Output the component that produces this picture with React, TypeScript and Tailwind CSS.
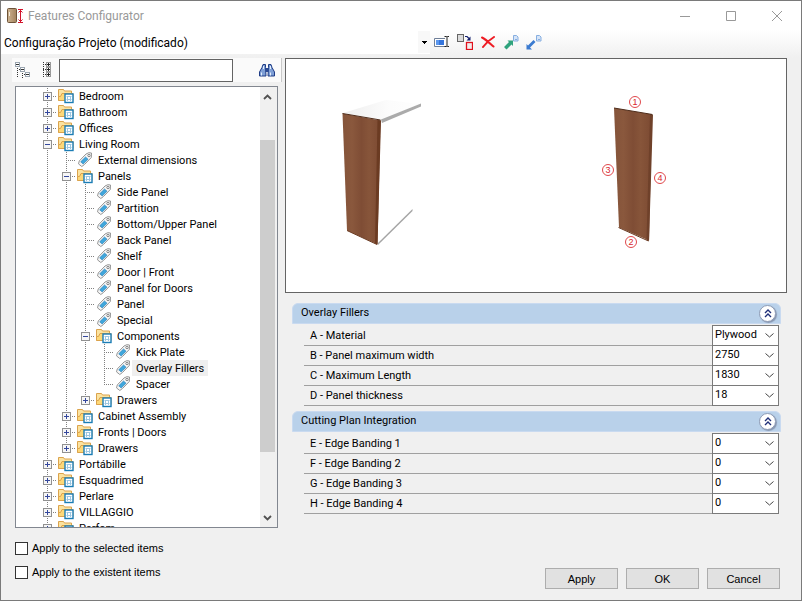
import { Fragment, useId, useState } from 'react'
import type { ReactNode } from 'react'

interface TreeNode {
  label: string
  kind: 'folder' | 'tag'
  children?: TreeNode[]
}

interface PropertyField {
  label: string
  value: string
}

const folder = (label: string, children?: TreeNode[]): TreeNode => ({ label, kind: 'folder', children })
const tag = (label: string): TreeNode => ({ label, kind: 'tag' })

const tree: TreeNode[] = [
  folder('Bedroom'),
  folder('Bathroom'),
  folder('Offices'),
  folder('Living Room', [
    tag('External dimensions'),
    folder('Panels', [
      tag('Side Panel'),
      tag('Partition'),
      tag('Bottom/Upper Panel'),
      tag('Back Panel'),
      tag('Shelf'),
      tag('Door | Front'),
      tag('Panel for Doors'),
      tag('Panel'),
      tag('Special'),
      folder('Components', [tag('Kick Plate'), tag('Overlay Fillers'), tag('Spacer')]),
      folder('Drawers'),
    ]),
    folder('Cabinet Assembly'),
    folder('Fronts | Doors'),
    folder('Drawers'),
  ]),
  folder('Portábille'),
  folder('Esquadrimed'),
  folder('Perlare'),
  folder('VILLAGGIO'),
  folder('Perfom'),
]

const overlayFields: PropertyField[] = [
  { label: 'A - Material', value: 'Plywood' },
  { label: 'B - Panel maximum width', value: '2750' },
  { label: 'C - Maximum Length', value: '1830' },
  { label: 'D - Panel thickness', value: '18' },
]

const cuttingFields: PropertyField[] = [
  { label: 'E - Edge Banding 1', value: '0' },
  { label: 'F - Edge Banding 2', value: '0' },
  { label: 'G - Edge Banding 3', value: '0' },
  { label: 'H - Edge Banding 4', value: '0' },
]

function AppIcon() {
  return (
    <svg width="17" height="16" viewBox="0 0 17 16">
      <defs>
        <linearGradient id="door">
          <stop offset="0" stopColor="#cdb491" />
          <stop offset="1" stopColor="#a2825d" />
        </linearGradient>
      </defs>
      <rect x="0.5" y="0.5" width="9" height="14" rx="1" fill="url(#door)" stroke="#6d5338" />
      <rect x="2" y="4" width="1" height="4" fill="#f4ead8" />
      <path d="M11 1.5h5M11 14.5h5M13.5 2v12M11.500 4.500l2-2 2 2M11.500 11.500l2 2 2-2" stroke="#d2142c" fill="none" />
    </svg>
  )
}

function FolderIcon() {
  return (
    <svg width="18" height="16" viewBox="0 0 18 16" className="shrink-0">
      <path d="M1.500 12.500V1.500h5l1 1.500h7v2.500" fill="#fbe3a0" stroke="#dba34c" />
      <path d="M1.500 12.500V8.500h2l1.500-3h11v7z" fill="#fdd878" stroke="#dba34c" />
      <rect x="8" y="6" width="8" height="8.500" fill="#fff" stroke="#1b7db5" strokeWidth="1.400" />
      <path d="M9.500 8.500h5M9.500 11.500h5M10.500 8v5M13.500 8v5" stroke="#9cc6e0" fill="none" />
    </svg>
  )
}

function TagIcon() {
  return (
    <svg width="18" height="16" viewBox="0 0 18 16" className="shrink-0">
      <path d="M10 2L12.800.7l2.700.3-.2 4.500L8.500 12.500l-2.700 2-3.300-2.600.8-3z" fill="#f6f6f6" stroke="#969696" />
      <circle cx="13" cy="3.500" r="1.200" fill="#fff" stroke="#777" strokeWidth=".9" />
      <path d="M9.500 5l2.500 2.200L7.200 12 4.700 9.800z" fill="#3fa7dc" stroke="#2379b4" strokeWidth=".6" />
    </svg>
  )
}

// dotted connector lines on the left of a row
function Guide({ kind, box }: { kind: 'through' | 'branch' | 'end' | 'none'; box?: 'plus' | 'minus' }) {
  return (
    <svg width="19" height="16" viewBox="0 0 19 16" className="shrink-0" shapeRendering="crispEdges">
      {kind !== 'none' && (
        <path d={kind === 'end' ? 'M9.5 0v8' : 'M9.5 0v16'} stroke="#808080" strokeDasharray="1 1" />
      )}
      {(kind === 'branch' || kind === 'end') && <path d="M9 8.5h10" stroke="#808080" strokeDasharray="1 1" />}
      {box && (
        <>
          <rect x="5.5" y="4.5" width="8" height="8" fill="#f6f6f6" stroke="#919191" />
          <path d={box === 'plus' ? 'M7 8.5h5M9.5 6v5' : 'M7 8.5h5'} stroke="#34479c" />
        </>
      )}
    </svg>
  )
}

interface TreeRowsProps {
  nodes: TreeNode[]
  parents: boolean[]
  selected: string
  onSelect: (label: string) => void
}

function TreeRows({ nodes, parents, selected, onSelect }: TreeRowsProps) {
  return (
    <>
      {nodes.map((node, index) => {
        const last = index === nodes.length - 1
        return (
          <Fragment key={node.label}>
            <li className="flex h-4 items-center">
              {parents.map((more, level) => (
                <Guide key={level} kind={more ? 'through' : 'none'} />
              ))}
              <Guide
                kind={last ? 'end' : 'branch'}
                box={node.kind === 'tag' ? undefined : node.children ? 'minus' : 'plus'}
              />
              {node.kind === 'folder' ? <FolderIcon /> : <TagIcon />}
              <button
                onClick={() => onSelect(node.label)}
                className={
                  node.label === selected
                    ? 'h-4 bg-[#efefef] px-1 pt-px leading-[15px] whitespace-nowrap'
                    : 'h-4 px-1 pt-px leading-[15px] whitespace-nowrap'
                }
              >
                {node.label}
              </button>
            </li>
            {node.children && (
              <TreeRows nodes={node.children} parents={[...parents, !last]} selected={selected} onSelect={onSelect} />
            )}
          </Fragment>
        )
      })}
    </>
  )
}

function ToolButton({ label, children }: { label: string; children: ReactNode }) {
  return (
    <button aria-label={label} className="flex h-6 w-[23px] items-center justify-center">
      {children}
    </button>
  )
}

function Toolbar() {
  return (
    <div className="flex h-6 items-center">
      <div className="grid h-6 w-[429px] items-center bg-white">
        <select
          aria-label="Configuration"
          className="col-start-1 row-start-1 h-6 appearance-none pt-0.5 pl-[3px] text-[12px] outline-none"
        >
          <option>Configuração Projeto (modificado)</option>
        </select>
        <span className="pointer-events-none col-start-1 row-start-1 flex h-[22px] w-3 items-center justify-center justify-self-end bg-[#f8f8f8]">
          <svg width="5" height="3" viewBox="0 0 5 3" shapeRendering="crispEdges">
            <path d="M0 0h5v1H4v1H3v1H2V2H1V1H0z" fill="#000" />
          </svg>
        </span>
      </div>
      <ToolButton label="Rename">
        <svg width="16" height="14" viewBox="0 0 16 14">
          <path d="M11 3.5H.5v8H11" fill="#fff" stroke="#6f7f98" />
          <rect x="2" y="5" width="8" height="5" fill="#5b97ee" />
          <rect x="5" y="5" width="5" height="5" fill="#3575dc" />
          <path d="M10.500 1.500h2l.5.5.5-.5H15M13 2v9M10.500 11.500h2l.5-.5.5.5H15" stroke="#222" fill="none" />
        </svg>
      </ToolButton>
      <ToolButton label="Copy">
        <svg width="16" height="16" viewBox="0 0 16 16">
          <rect x=".5" y=".5" width="6" height="7" fill="#dcdcdc" stroke="#666" />
          <path d="M8 2.500h2l2 2" stroke="#14206e" fill="none" strokeWidth="1.200" />
          <path d="M13.500 2.500v4h-4z" fill="#14206e" />
          <rect x="9.500" y="8.500" width="6" height="7" fill="#f2eeee" stroke="#e0101c" strokeWidth="1.300" />
        </svg>
      </ToolButton>
      <ToolButton label="Delete">
        <svg width="14" height="12" viewBox="0 0 14 12">
          <path d="M1 1.500c4 2 8 6 11.500 9M13 1C8 4 5 7 2 11" stroke="#ee1c24" strokeWidth="2" strokeLinecap="round" fill="none" />
        </svg>
      </ToolButton>
      <ToolButton label="Export">
        <svg width="16" height="15" viewBox="0 0 16 15">
          <path d="M1 12l5-5-1.500-1.500H10V11L8.500 9.500 3.500 14.500z" fill="#2fa37d" />
          <path d="M10.500.5h3l1.500 1.500v4h-4.500z" fill="#d5e4f8" stroke="#86aee0" />
          <path d="M12 4.500h2" stroke="#86aee0" />
        </svg>
      </ToolButton>
      <ToolButton label="Import">
        <svg width="16" height="15" viewBox="0 0 16 15">
          <path d="M.5 14.500V9L2 10.500 7.500 5l2 2L4 12.500 6 14.500z" fill="#3b7bd0" />
          <path d="M10.500.5h3l1.500 1.500v4h-4.500z" fill="#d5e4f8" stroke="#86aee0" />
          <path d="M12 4.500h2" stroke="#86aee0" />
        </svg>
      </ToolButton>
    </div>
  )
}

function SearchBar() {
  return (
    <div className="flex h-6 items-center bg-[#fafafa] pr-0.5">
      <button aria-label="Collapse all" className="flex w-[22px] justify-center">
        <svg width="16" height="16" viewBox="0 0 16 16" shapeRendering="crispEdges">
          <path d="M2.500 6v10M7.500 11v5M5 7.500H3M10 12.500H8" stroke="#333" strokeDasharray="1 1" />
          <path d="M.5.5h4v4h-4zM5.500 5.500h4v4h-4zM10.500 10.500h4v4h-4z" fill="#fff" stroke="#9aa5b0" />
          <path d="M1 2.500h3M6 7.500h3M11 12.500h3" stroke="#333" />
        </svg>
      </button>
      <button aria-label="Expand all" className="flex w-[25px] justify-center">
        <svg width="8" height="16" viewBox="0 0 8 16" shapeRendering="crispEdges">
          <path d="M.5 0v16M0 2.500h3M0 7.500h3M0 12.500h3" stroke="#333" strokeDasharray="1 1" />
          <path d="M3.500.5h4v4h-4zM3.500 5.500h4v4h-4zM3.500 10.500h4v4h-4z" fill="#fff" stroke="#9a9a9a" />
          <path d="M4 2.500h3M5.500 1v3M4 7.500h3M5.500 6v3M4 12.500h3M5.500 11v3" stroke="#222" />
        </svg>
      </button>
      <input
        aria-label="Search"
        type="text"
        className="h-[23px] w-[174px] border border-[#646464] bg-white px-1 outline-none"
      />
      <button aria-label="Find" className="ml-auto flex w-6 justify-center">
        <svg width="16" height="15" viewBox="0 0 16 15">
          <path d="M3 4.500L4 1.500h2.500v3l.5 8.500H.5V9zM13 4.500L12 1.500H9.500v3L9 13h6.500V9z" fill="#7e9fd6" stroke="#1f3c86" />
          <path d="M6.500 5h3v4h-3z" fill="#2b4a94" />
          <path d="M2.500 9.500v3M11.500 9.500v3M4.500 3v3M11.500 3v3" stroke="#e4eefb" />
        </svg>
      </button>
    </div>
  )
}

function ScrollBar() {
  return (
    <div className="flex w-[17px] shrink-0 flex-col items-start bg-[#f0f0f0]">
      <svg width="15" height="53" viewBox="0 0 15 53">
        <path d="M4 12l3.500-3.500L11 12" stroke="#505050" strokeWidth="1.800" fill="none" />
      </svg>
      <div className="w-[15px] flex-1 bg-[#cdcdcd]" />
      <svg width="15" height="75" viewBox="0 0 15 75">
        <path d="M4 64l3.500 3.500L11 64" stroke="#505050" strokeWidth="1.800" fill="none" />
      </svg>
    </div>
  )
}

function Callout({ x, y, value }: { x: number; y: number; value: string }) {
  return (
    <>
      <circle cx={x} cy={y} r="5.500" fill="#fff" stroke="#e0484c" />
      <text x={x} y={y + 3} textAnchor="middle" fontSize="9" fill="#d8252c">
        {value}
      </text>
    </>
  )
}

function Preview() {
  return (
    <div className="flex h-[235px] justify-center border border-[#646464] bg-white">
      <svg viewBox="0 0 500 233" className="h-full w-full font-['Liberation_Sans',Arial,sans-serif]">
        <defs>
          <linearGradient id="wood">
            <stop offset="0" stopColor="#85543a" />
            <stop offset=".25" stopColor="#8a583d" />
            <stop offset=".5" stopColor="#7f4d35" />
            <stop offset=".7" stopColor="#87553a" />
            <stop offset="1" stopColor="#7c4a32" />
          </linearGradient>
          <linearGradient id="top">
            <stop offset="0" stopColor="#eeeeee" />
            <stop offset=".6" stopColor="#fcfcfc" />
            <stop offset="1" stopColor="#fefefe" />
          </linearGradient>
        </defs>
        <path d="M57 54l43-13 35 4-39 16z" fill="url(#top)" />
        <path d="M95 60.500l40-16v3L96 64z" fill="#ababab" />
        <path d="M92 184L126.500 150v2L92 186z" fill="#a4a4a4" />
        <path d="M56.500 54.500l38 7-3 124-30.500-14z" fill="url(#wood)" />
        <path d="M91.500 61l3.500.5-3.500 124-2.500-1z" fill="#6b3b22" />
        <path d="M56.500 54.500l38 6.500" stroke="#4e2c1a" />
        <path d="M61 171.500l30 14" stroke="#6b3b22" />
        <path d="M328 49l38 6.500-3 126-30-13z" fill="url(#wood)" />
        <path d="M364 55l3 1-4 126-2.500-1z" fill="#6f412a" />
        <path d="M328 49l38.500 6.500" stroke="#4e2c1a" />
        <path d="M332.500 168.500l30 13.500" stroke="#6b3b22" />
        <Callout x={349} y={43} value="1" />
        <Callout x={345} y={183} value="2" />
        <Callout x={322} y={111} value="3" />
        <Callout x={374} y={119} value="4" />
      </svg>
    </div>
  )
}

function Field({ label, value }: PropertyField) {
  const id = useId()
  return (
    <div className="flex h-5 border-b border-[#a0a0a0]">
      <label htmlFor={id} className="flex-1 pl-1.5 leading-5">
        {label}
      </label>
      <div className="-mt-px -mb-px grid w-[67px] items-center border border-[#7a7a7a] bg-white">
        <select id={id} className="col-start-1 row-start-1 h-[19px] w-full appearance-none pl-0.5 outline-none">
          <option>{value}</option>
        </select>
        <svg
          width="9"
          height="5"
          viewBox="0 0 9 5"
          className="pointer-events-none col-start-1 row-start-1 mr-1 justify-self-end"
        >
          <path d="M.5.5l4 3.500 4-3.500" stroke="#444" fill="none" />
        </svg>
      </div>
    </div>
  )
}

function FieldGroup({ title, fields }: { title: string; fields: PropertyField[] }) {
  const [open, setOpen] = useState(true)
  return (
    <section>
      <h2 className="flex h-[21px] items-center justify-between rounded-t-md border border-[#c9daf0] bg-[#b9d1ea] pr-1 pl-2">
        {title}
        <button
          aria-label={`Toggle ${title}`}
          onClick={() => setOpen(!open)}
          className="flex size-[17px] items-center justify-center rounded-full border border-[#8d9bb5] bg-white shadow-[1px_1px_1px_#8796b0]"
        >
          <svg width="8" height="9" viewBox="0 0 8 9">
            <path d="M1 4l3-3 3 3M1 8l3-3 3 3" stroke="#1f2f78" strokeWidth="1.400" fill="none" />
          </svg>
        </button>
      </h2>
      {open && (
        <div className="mt-0.5 mr-0.5 ml-3">
          {fields.map((field) => (
            <Field key={field.label} label={field.label} value={field.value} />
          ))}
        </div>
      )}
    </section>
  )
}

function CheckRow({ label }: { label: string }) {
  return (
    <label className="flex h-4 items-center gap-1">
      <input
        type="checkbox"
        className="size-[13px] appearance-none border border-[#333] bg-white checked:bg-[#333]"
      />
      {label}
    </label>
  )
}

export default function App() {
  const [selected, setSelected] = useState('Overlay Fillers')

  return (
    <div className="flex h-screen flex-col border border-[#7a7a7a] bg-[#f0f0f0] font-[Roboto,sans-serif] text-[11px] text-black">
      <header className="flex h-[29px] shrink-0 items-center bg-white pl-1.5">
        <AppIcon />
        <h1 className="ml-1 text-[12px] text-[#999]">Features Configurator</h1>
        <div className="mr-px ml-auto flex">
          <button aria-label="Minimize" className="flex h-7 w-[46px] items-center justify-center">
            <svg width="10" height="10" viewBox="0 0 10 10">
              <path d="M0 5.500h10" stroke="#999" />
            </svg>
          </button>
          <button aria-label="Maximize" className="flex h-7 w-[46px] items-center justify-center">
            <svg width="10" height="10" viewBox="0 0 10 10">
              <path d="M.5.5h9v9h-9z" stroke="#999" fill="none" />
            </svg>
          </button>
          <button aria-label="Close" className="flex h-7 w-[46px] items-center justify-center">
            <svg width="10" height="10" viewBox="0 0 10 10">
              <path d="M0 0l10 10M10 0L0 10" stroke="#999" fill="none" />
            </svg>
          </button>
        </div>
      </header>

      <div className="h-7 shrink-0 bg-linear-to-b from-white to-[#f0f0f0]">
        <Toolbar />
      </div>

      <div className="flex min-h-0 flex-1">
        {/* tree and apply options */}
        <aside className="flex w-[281px] shrink-0 flex-col pb-5">
          <div className="ml-[11px] border-r border-[#c8c8c8]">
            <SearchBar />
          </div>
          <div className="mt-1 mr-1 ml-[14px] flex min-h-0 flex-1 overflow-hidden border border-[#828790] bg-white">
            <ul className="min-w-0 flex-1 overflow-hidden pt-px pl-[22px]">
              <TreeRows nodes={tree} parents={[]} selected={selected} onSelect={setSelected} />
            </ul>
            <ScrollBar />
          </div>
          <div className="mt-3 ml-[14px] flex flex-col gap-2 font-['Liberation_Sans',Arial,sans-serif]">
            <CheckRow label="Apply to the selected items" />
            <CheckRow label="Apply to the existent items" />
          </div>
        </aside>

        {/* preview and properties */}
        <main className="flex min-w-0 flex-1 flex-col pr-[14px] pb-[11px] pl-[3px]">
          <Preview />
          <div className="mt-2.5 mr-1.5 ml-[7px] flex flex-col gap-[5px]">
            <FieldGroup title="Overlay Fillers" fields={overlayFields} />
            <FieldGroup title="Cutting Plan Integration" fields={cuttingFields} />
          </div>
          <div className="mt-auto mr-[7px] flex justify-end gap-2 font-['Liberation_Sans',Arial,sans-serif]">
            <button className="h-[21px] w-[73px] border border-[#adadad] bg-[#e1e1e1] leading-4">Apply</button>
            <button className="h-[21px] w-[73px] border border-[#adadad] bg-[#e1e1e1] leading-4">OK</button>
            <button className="h-[21px] w-[73px] border border-[#adadad] bg-[#e1e1e1] leading-4">Cancel</button>
          </div>
        </main>
      </div>
    </div>
  )
}
